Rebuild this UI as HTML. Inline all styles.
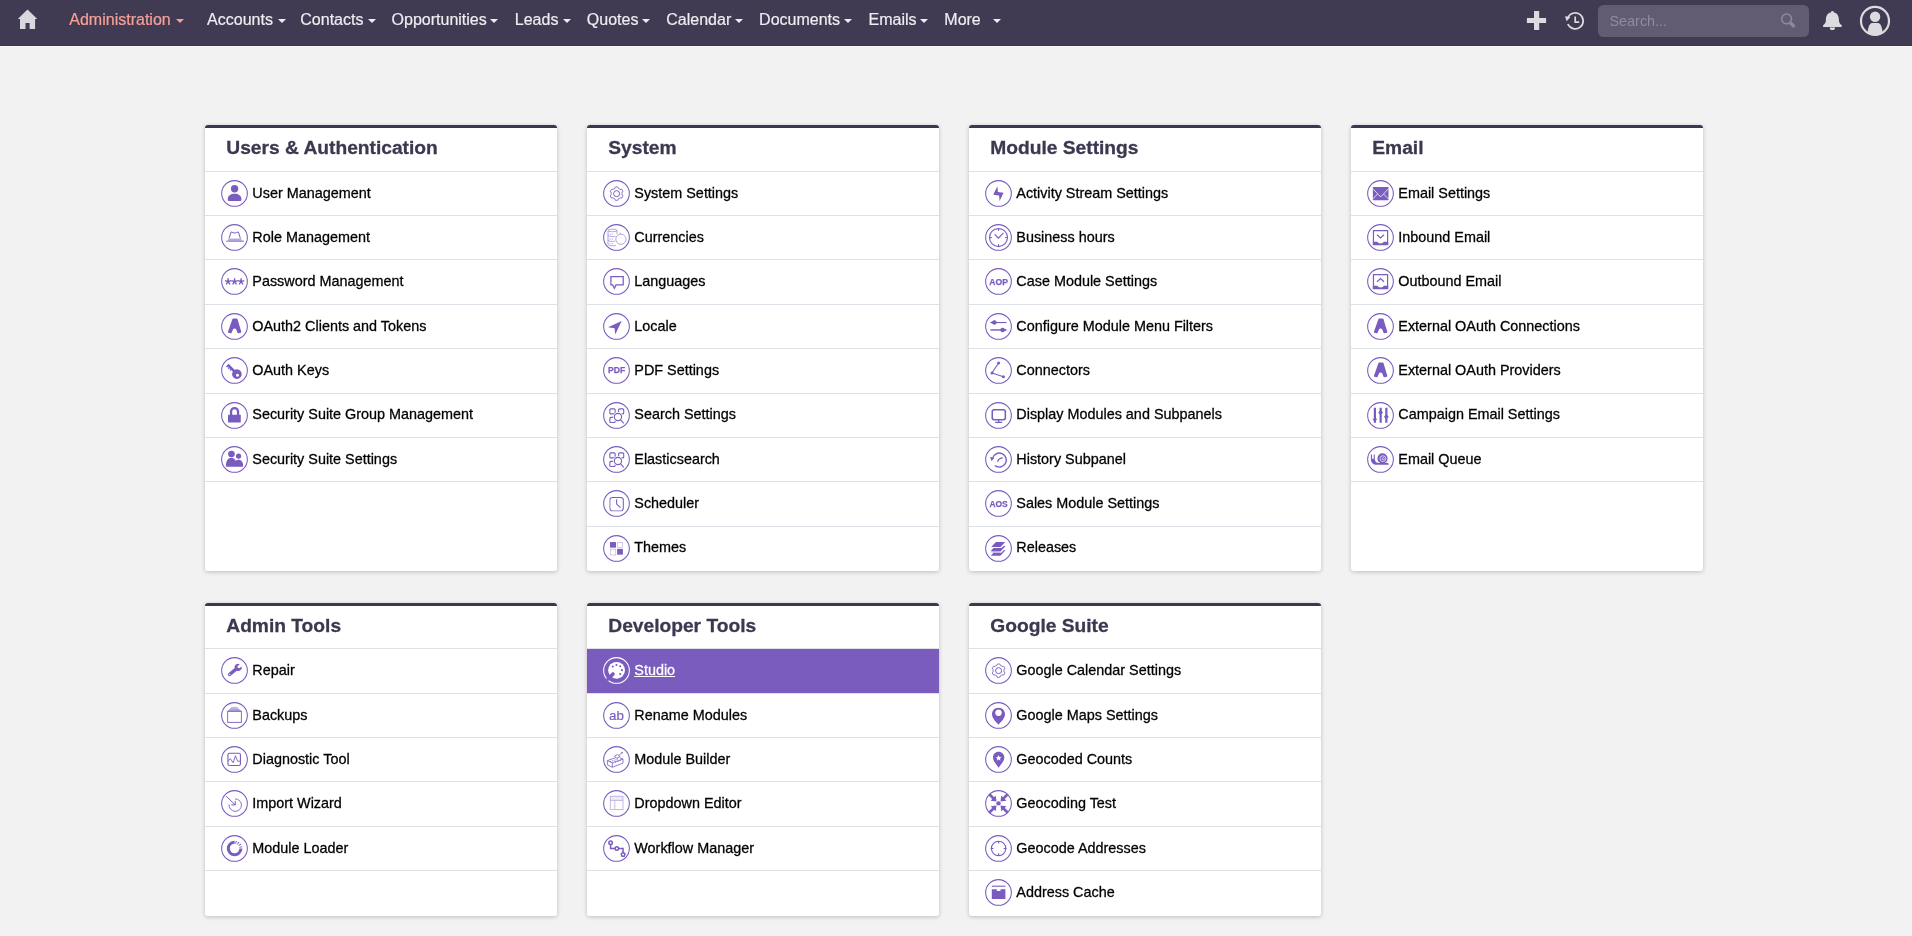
<!DOCTYPE html>
<html><head><meta charset="utf-8"><title>SuiteCRM - Administration</title>
<style>
*{box-sizing:border-box}
html,body{margin:0;padding:0}
body{width:1912px;height:936px;overflow:hidden;background:#f2f2f2;font-family:"Liberation Sans",sans-serif;position:relative;color:#000}
.nav{position:absolute;left:0;top:0;width:1912px;height:46.5px;background:#403a52;border-bottom:1px solid #f8f8f9;box-shadow:inset 0 -1px 0 #3a344b}
.ni{position:absolute;top:10.2px;font-size:16px;line-height:19px;color:#eeedf1;white-space:nowrap;-webkit-text-stroke:0.2px currentColor}
.ni.on{color:#f5a198}
.ni i{display:inline-block;width:0;height:0;border-left:4px solid transparent;border-right:4px solid transparent;border-top:4.3px solid currentColor;margin-left:5px;vertical-align:2.2px}
.wrap{position:absolute;left:0;top:0;width:1912px;height:936px;will-change:transform}
.nv{position:absolute}
.sb{position:absolute;left:1598px;top:5px;width:211px;height:32px;border-radius:5.5px;background:#625c73}
.sb span{position:absolute;left:11.5px;top:7.5px;font-size:14.4px;line-height:17px;color:#908b9f}
.card{position:absolute;width:352px;background:#fff;border-top:3px solid #3d3750;border-radius:3px;box-shadow:0 1px 4px rgba(0,0,0,.22);overflow:hidden}
.hd{height:43px;padding:7.8px 0 0 21.3px;font-size:19.2px;font-weight:bold;line-height:24px;color:#3d3750;white-space:nowrap;-webkit-text-stroke:0.3px #3d3750}
.row{position:absolute;left:0;width:352px;border-top:1px solid #dde2e8;font-size:14.4px;white-space:nowrap}
.row span{position:absolute;left:47.3px;line-height:16px;-webkit-text-stroke:0.28px currentColor}
.hd.g2{height:42px;padding-top:7.8px}
.row.act{background:#7a5cbe;color:#fff}
.row.act span{text-decoration:underline}
.ic{position:absolute;left:15px;top:7px;display:block}
</style></head><body><div class="wrap">
<div class="nav">
<svg class="nv" style="left:17px;top:9px" width="21" height="21" viewBox="0 0 21 21"><path fill="#d8d7dd" d="M10.5 0.4 L20.3 10 H18.1 V19.9 H12.6 V14 H8.5 V19.9 H3 V10 H0.8 Z"/></svg>
<div class="ni on" style="left:69.3px">Administration<i></i></div><div class="ni" style="left:207.1px">Accounts<i></i></div><div class="ni" style="left:300.3px">Contacts<i></i></div><div class="ni" style="left:391.6px">Opportunities<i style="margin-left:3.7px"></i></div><div class="ni" style="left:514.8px">Leads<i></i></div><div class="ni" style="left:586.8px">Quotes<i style="margin-left:4px"></i></div><div class="ni" style="left:666.3px">Calendar<i style="margin-left:3.6px"></i></div><div class="ni" style="left:759.1px">Documents<i style="margin-left:3.5px"></i></div><div class="ni" style="left:868.5px">Emails<i style="margin-left:3.2px"></i></div><div class="ni" style="left:944.3px">More<i style="margin-left:12px"></i></div>
<svg class="nv" style="left:1520px;top:0" width="392" height="45" viewBox="1520 0 392 45">
<defs><clipPath id="avc"><circle cx="1875" cy="20.9" r="14"/></clipPath></defs>
<path fill="#dcdbe0" d="M1534 11h5.2v7.1h6.900v4.900h-6.900v7.100h-5.200v-7.100h-7.100v-4.900h7.100z"/>
<g fill="none" stroke="#dcdbe0" stroke-width="1.7"><path d="M1567.700 18a8 8 0 1 1 0.100 6"/><path d="M1575.200 16.600v5.600h4"/></g>
<path fill="#dcdbe0" d="M1565 16.200l5.400 0.900-3.800 4.200z"/>
<g fill="#dcdbe0"><circle cx="1832.400" cy="12.300" r="1.400"/><path d="M1832.400 12.300c4.300 0 6.500 3.100 6.500 7.300 0 2.600 0.500 4.300 2.800 5.600v1.800h-18.600v-1.800c2.300-1.300 2.800-3 2.800-5.600 0-4.200 2.200-7.300 6.500-7.300z"/><path d="M1829.700 27.400a2.700 2.700 0 0 0 5.400 0z"/></g>
<circle cx="1875" cy="20.900" r="14" fill="none" stroke="#dcdbe0" stroke-width="2.200"/>
<circle cx="1875.100" cy="16.800" r="5.200" fill="#dcdbe0"/>
<path clip-path="url(#avc)" fill="#dcdbe0" d="M1867.400 38c0-4 0.200-15 5-15h5.400c4.800 0 5 11 5 15z"/>
</svg>
<div class="sb"><span>Search...</span><svg style="position:absolute;left:180px;top:7px" width="22" height="22" viewBox="0 0 22 22"><circle cx="8.600" cy="6.900" r="4.900" fill="none" stroke="#8e889d" stroke-width="1.500"/><path d="M13 11.500l2.400 2.300" stroke="#8e889d" stroke-width="3.300" stroke-linecap="round"/></svg></div>
</div>
<div class="card" style="left:205px;top:125px;height:445.70px"><div class="hd">Users &amp; Authentication</div><div class="row" style="top:43px;height:44px"><svg class="ic" width="28" height="28" viewBox="-0.5 -0.45 28 28" fill="#7a5cc0" stroke="none" style="color:#7a5cc0"><circle cx="14" cy="14" r="12.85" fill="none" stroke="#7a5cc0" stroke-width="1.05"/><circle cx="14.1" cy="9.300" r="3.650"/><path d="M7.300 20.600v-1.200c0-3 3-5 6.800-5s6.800 2 6.800 5v1.200a1 1 0 0 1-1 1h-11.600a1 1 0 0 1-1-1z"/></svg><span style="top:13.2px">User Management</span></div><div class="row" style="top:87px;height:44px"><svg class="ic" width="28" height="28" viewBox="-0.5 -0.45 28 28" fill="#7a5cc0" stroke="none" style="color:#7a5cc0"><circle cx="14" cy="14" r="12.85" fill="none" stroke="#7a5cc0" stroke-width="1.05"/><path fill="none" stroke="currentColor" stroke-width="1" stroke-linejoin="round" d="M8.600 14.900l2-6.400c1.500 0 2.400 1.200 3.650 1.200s2.150-1.200 3.650-1.200l2 6.400"/><rect x="7.700" y="15.100" width="13.200" height="2.100" opacity=".55"/><path fill="none" stroke="currentColor" stroke-width="1" d="M5.700 17.700h17.700"/></svg><span style="top:13.2px">Role Management</span></div><div class="row" style="top:131px;height:45px"><svg class="ic" width="28" height="28" viewBox="-0.5 -0.45 28 28" fill="#7a5cc0" stroke="none" style="color:#7a5cc0"><circle cx="14" cy="14" r="12.85" fill="none" stroke="#7a5cc0" stroke-width="1.05"/><path fill="none" stroke="currentColor" stroke-width="1.400" d="M7.60 14.20L7.60 10.90M7.60 14.20L10.74 13.18M7.60 14.20L9.54 16.87M7.60 14.20L5.66 16.87M7.60 14.20L4.46 13.18M14.10 14.20L14.10 10.90M14.10 14.20L17.24 13.18M14.10 14.20L16.04 16.87M14.10 14.20L12.16 16.87M14.10 14.20L10.96 13.18M20.60 14.20L20.60 10.90M20.60 14.20L23.74 13.18M20.60 14.20L22.54 16.87M20.60 14.20L18.66 16.87M20.60 14.20L17.46 13.18"/></svg><span style="top:13.2px">Password Management</span></div><div class="row" style="top:176px;height:44px"><svg class="ic" width="28" height="28" viewBox="-0.5 -0.45 28 28" fill="#7a5cc0" stroke="none" style="color:#7a5cc0"><circle cx="14" cy="14" r="12.85" fill="none" stroke="#7a5cc0" stroke-width="1.05"/><path stroke="currentColor" stroke-width="1.600" stroke-linejoin="round" d="M12.700 6.800h3.500l3.800 12.700-2.200 0.600-1.300-3.300c-0.400-1-1.300-1.600-2.400-1.600s-2 0.600-2.400 1.600l-1.300 3.300-2.200-0.600z"/></svg><span style="top:13.2px">OAuth2 Clients and Tokens</span></div><div class="row" style="top:220px;height:45px"><svg class="ic" width="28" height="28" viewBox="-0.5 -0.45 28 28" fill="#7a5cc0" stroke="none" style="color:#7a5cc0"><circle cx="14" cy="14" r="12.85" fill="none" stroke="#7a5cc0" stroke-width="1.05"/><path fill-rule="evenodd" d="M16.400 12.900a4.800 4.800 0 1 1-0.010 0zM17 17.300a1.500 1.500 0 1 0 0.010 0z"/><g transform="translate(16.400 17.700) rotate(-135)"><path d="M3 1.500H13.200V-2.300H11.600V-1.100H10.600V-2.300H9.300V-1.100H8.300V-2.300H7V-1.100H3Z"/></g></svg><span style="top:13.2px">OAuth Keys</span></div><div class="row" style="top:265px;height:44px"><svg class="ic" width="28" height="28" viewBox="-0.5 -0.45 28 28" fill="#7a5cc0" stroke="none" style="color:#7a5cc0"><circle cx="14" cy="14" r="12.85" fill="none" stroke="#7a5cc0" stroke-width="1.05"/><rect x="7.500" y="13.200" width="12.800" height="7.800" rx=".6"/><path fill="none" stroke="currentColor" stroke-width="2.300" d="M10.550 13.600v-3.500a3.500 3.500 0 0 1 7 0v3.500"/></svg><span style="top:12.2px">Security Suite Group Management</span></div><div class="row" style="top:309px;height:44px"><svg class="ic" width="28" height="28" viewBox="-0.5 -0.45 28 28" fill="#7a5cc0" stroke="none" style="color:#7a5cc0"><circle cx="14" cy="14" r="12.85" fill="none" stroke="#7a5cc0" stroke-width="1.05"/><circle cx="10.950" cy="8.550" r="3.330"/><circle cx="18.050" cy="10.650" r="2.640"/><path d="M5.450 20.300c0-5 2.400-7.900 5.300-7.900 2 0 3.500 1.200 4.300 3 0.900-0.700 1.900-1 3-1 2.800 0 4.600 2.400 4.600 5.900 0 0.600-0.400 1.050-1 1.050h-15.200c-0.600 0-1-0.450-1-1.050z"/></svg><span style="top:13.2px">Security Suite Settings</span></div><div class="row" style="top:353px;height:45px"></div></div>
<div class="card" style="left:587px;top:125px;height:445.70px"><div class="hd">System</div><div class="row" style="top:43px;height:44px"><svg class="ic" width="28" height="28" viewBox="-0.5 -0.45 28 28" fill="#7a5cc0" stroke="none" style="color:#7a5cc0"><circle cx="14" cy="14" r="12.85" fill="none" stroke="#7a5cc0" stroke-width="1.05"/><path fill="none" stroke="currentColor" stroke-width="1" stroke-linejoin="round" d="M19.60 14.20L19.58 14.68L19.52 15.16L19.99 15.78L20.40 16.49L20.17 17.03L19.90 17.55L19.59 18.04L19.23 18.51L18.41 18.51L17.64 18.41L17.25 18.71L16.85 18.96L16.42 19.18L15.98 19.37L15.68 20.09L15.26 20.80L14.68 20.87L14.10 20.90L13.52 20.87L12.94 20.80L12.52 20.09L12.22 19.37L11.78 19.18L11.35 18.96L10.95 18.71L10.56 18.41L9.79 18.51L8.97 18.51L8.61 18.04L8.30 17.55L8.03 17.03L7.80 16.49L8.21 15.78L8.68 15.16L8.62 14.68L8.60 14.20L8.62 13.72L8.68 13.24L8.21 12.62L7.80 11.91L8.03 11.37L8.30 10.85L8.61 10.36L8.97 9.89L9.79 9.89L10.56 9.99L10.95 9.69L11.35 9.44L11.78 9.22L12.22 9.03L12.52 8.31L12.94 7.60L13.52 7.53L14.10 7.50L14.68 7.53L15.26 7.60L15.68 8.31L15.98 9.03L16.42 9.22L16.85 9.44L17.25 9.69L17.64 9.99L18.41 9.89L19.23 9.89L19.59 10.36L19.90 10.85L20.17 11.37L20.40 11.91L19.99 12.62L19.52 13.24L19.58 13.72L19.60 14.20Z"/><circle fill="none" stroke="currentColor" stroke-width="1" cx="14.1" cy="14.200" r="3"/></svg><span style="top:13.2px">System Settings</span></div><div class="row" style="top:87px;height:44px"><svg class="ic" width="28" height="28" viewBox="-0.5 -0.45 28 28" fill="#7a5cc0" stroke="none" style="color:#7a5cc0"><circle cx="14" cy="14" r="12.85" fill="none" stroke="#7a5cc0" stroke-width="1.05"/><g fill="none" stroke="currentColor" stroke-width=".7" opacity=".8"><ellipse cx="10" cy="7" rx="4.500" ry="1.300"/><path d="M5.500 7v14c0 0.800 2 1.400 4.500 1.400 1.500 0 2.700-0.200 3.500-0.500M14.500 7v3.800M5.500 11.800c0 0.800 2 1.400 4.500 1.400 1.100 0 2.100-0.100 2.900-0.300M5.500 16.600c0 0.800 2 1.400 4.500 1.400 0.900 0 1.800-0.100 2.500-0.200"/><path stroke-dasharray="1.200 1" d="M7 10.800h3.500M7 15.600h3.500M7 20.300h3.500"/><circle cx="18.400" cy="15.800" r="5.100" fill="#fff"/><path d="M17 9.300l1.200 1.400"/></g></svg><span style="top:13.2px">Currencies</span></div><div class="row" style="top:131px;height:45px"><svg class="ic" width="28" height="28" viewBox="-0.5 -0.45 28 28" fill="#7a5cc0" stroke="none" style="color:#7a5cc0"><circle cx="14" cy="14" r="12.85" fill="none" stroke="#7a5cc0" stroke-width="1.05"/><path fill="none" stroke="currentColor" stroke-width="1.250" stroke-linejoin="miter" d="M8.400 9.250h12.300v8.250h-7.200l-1.600 3.300-1.700-3.300h-1.800z"/></svg><span style="top:13.2px">Languages</span></div><div class="row" style="top:176px;height:44px"><svg class="ic" width="28" height="28" viewBox="-0.5 -0.45 28 28" fill="#7a5cc0" stroke="none" style="color:#7a5cc0"><circle cx="14" cy="14" r="12.85" fill="none" stroke="#7a5cc0" stroke-width="1.05"/><path d="M19.200 8.500l-13.700 6.200 6.600 1.100 0.600 6.200z"/></svg><span style="top:13.2px">Locale</span></div><div class="row" style="top:220px;height:45px"><svg class="ic" width="28" height="28" viewBox="-0.5 -0.45 28 28" fill="#7a5cc0" stroke="none" style="color:#7a5cc0"><circle cx="14" cy="14" r="12.85" fill="none" stroke="#7a5cc0" stroke-width="1.05"/><text x="14.150" y="16.950" text-anchor="middle" font-family="Liberation Sans,sans-serif" font-weight="bold" font-size="8.600" stroke="currentColor" stroke-width=".25">PDF</text></svg><span style="top:13.2px">PDF Settings</span></div><div class="row" style="top:265px;height:44px"><svg class="ic" width="28" height="28" viewBox="-0.5 -0.45 28 28" fill="#7a5cc0" stroke="none" style="color:#7a5cc0"><circle cx="14" cy="14" r="12.85" fill="none" stroke="#7a5cc0" stroke-width="1.05"/><g fill="none" stroke="currentColor" stroke-width="1.100"><rect x="7.350" y="7.400" width="5.300" height="5.050" rx="1"/><rect x="16.150" y="7.400" width="5.050" height="5.050" rx="1"/><rect x="7.350" y="15.950" width="5.300" height="5.050" rx="1"/><circle cx="15.470" cy="15.550" r="4.900" fill="#fff" stroke="none"/><circle cx="15.470" cy="15.550" r="3.600" fill="#fff"/><path d="M18 18.100l3.300 3.800"/></g></svg><span style="top:12.2px">Search Settings</span></div><div class="row" style="top:309px;height:44px"><svg class="ic" width="28" height="28" viewBox="-0.5 -0.45 28 28" fill="#7a5cc0" stroke="none" style="color:#7a5cc0"><circle cx="14" cy="14" r="12.85" fill="none" stroke="#7a5cc0" stroke-width="1.05"/><g fill="none" stroke="currentColor" stroke-width="1.100"><rect x="7.350" y="7.400" width="5.300" height="5.050" rx="1"/><rect x="16.150" y="7.400" width="5.050" height="5.050" rx="1"/><rect x="7.350" y="15.950" width="5.300" height="5.050" rx="1"/><circle cx="15.470" cy="15.550" r="4.900" fill="#fff" stroke="none"/><circle cx="15.470" cy="15.550" r="3.600" fill="#fff"/><path d="M18 18.100l3.300 3.800"/></g></svg><span style="top:13.2px">Elasticsearch</span></div><div class="row" style="top:353px;height:45px"><svg class="ic" width="28" height="28" viewBox="-0.5 -0.45 28 28" fill="#7a5cc0" stroke="none" style="color:#7a5cc0"><circle cx="14" cy="14" r="12.85" fill="none" stroke="#7a5cc0" stroke-width="1.05"/><rect fill="none" stroke="currentColor" stroke-width="1.050" x="7.400" y="8.100" width="13.400" height="13.200" rx="2.600"/><rect x="6.950" y="9.500" width=".9" height="10.400" fill="#fff" opacity=".45"/><rect x="8.800" y="20.800" width="10.600" height=".9" fill="#fff" opacity=".45"/><path fill="none" stroke="currentColor" stroke-width="1.100" d="M14.150 9.900v4.700l3.800 3.500"/></svg><span style="top:13.2px">Scheduler</span></div><div class="row" style="top:398px;height:45px"><svg class="ic" width="28" height="28" viewBox="-0.5 -0.45 28 28" fill="#7a5cc0" stroke="none" style="color:#7a5cc0"><circle cx="14" cy="14" r="12.85" fill="none" stroke="#7a5cc0" stroke-width="1.05"/><rect x="7.500" y="7.600" width="6" height="5.600"/><rect x="14.600" y="14.400" width="5.800" height="5.800"/><rect fill="none" stroke="currentColor" stroke-width=".6" opacity=".5" x="14.900" y="7.900" width="5.200" height="5.200"/><rect fill="none" stroke="currentColor" stroke-width=".6" opacity=".5" x="7.800" y="14.700" width="5.400" height="5.800"/></svg><span style="top:12.2px">Themes</span></div></div>
<div class="card" style="left:969px;top:125px;height:445.70px"><div class="hd">Module Settings</div><div class="row" style="top:43px;height:44px"><svg class="ic" width="28" height="28" viewBox="-0.5 -0.45 28 28" fill="#7a5cc0" stroke="none" style="color:#7a5cc0"><circle cx="14" cy="14" r="12.85" fill="none" stroke="#7a5cc0" stroke-width="1.05"/><path d="M12.900 6.700l-4.200 8.500 5.900 0.900 0.500 5.400 4-8.100-5.700-0.900z"/></svg><span style="top:13.2px">Activity Stream Settings</span></div><div class="row" style="top:87px;height:44px"><svg class="ic" width="28" height="28" viewBox="-0.5 -0.45 28 28" fill="#7a5cc0" stroke="none" style="color:#7a5cc0"><circle cx="14" cy="14" r="12.85" fill="none" stroke="#7a5cc0" stroke-width="1.05"/><circle fill="none" stroke="currentColor" stroke-width="1.150" cx="14" cy="14.100" r="9"/><path fill="none" stroke="currentColor" stroke-width="1.150" d="M10.200 10.900l3.700 3.900 5.100-5.300"/><path fill="none" stroke="currentColor" stroke-width="1" d="M14 5.100v2.400M14 20.700v2.400M5 14.100h2.400M20.600 14.100h2.400"/></svg><span style="top:13.2px">Business hours</span></div><div class="row" style="top:131px;height:45px"><svg class="ic" width="28" height="28" viewBox="-0.5 -0.45 28 28" fill="#7a5cc0" stroke="none" style="color:#7a5cc0"><circle cx="14" cy="14" r="12.85" fill="none" stroke="#7a5cc0" stroke-width="1.05"/><text x="14.150" y="17.200" text-anchor="middle" font-family="Liberation Sans,sans-serif" font-weight="bold" font-size="8.600" stroke="currentColor" stroke-width=".25" textLength="18.600" lengthAdjust="spacingAndGlyphs">AOP</text></svg><span style="top:13.2px">Case Module Settings</span></div><div class="row" style="top:176px;height:44px"><svg class="ic" width="28" height="28" viewBox="-0.5 -0.45 28 28" fill="#7a5cc0" stroke="none" style="color:#7a5cc0"><circle cx="14" cy="14" r="12.85" fill="none" stroke="#7a5cc0" stroke-width="1.05"/><path fill="none" stroke="currentColor" stroke-width="1.100" d="M6.200 10.100h15.900"/><path fill="none" stroke="currentColor" stroke-width="1.450" d="M5.900 17.500h15.700"/><path d="M5.500 10.100l2.500-1.200c0.500-0.800 1.200-1.100 1.900-1.100a2.100 2.100 0 0 1 0 4.500c-0.700 0-1.400-0.300-1.900-1zM22.500 17.500l-2.500-1.200c-0.500-0.800-1.200-1.100-1.900-1.100a2.100 2.100 0 0 0 0 4.500c0.700 0 1.400-0.300 1.900-1z"/></svg><span style="top:13.2px">Configure Module Menu Filters</span></div><div class="row" style="top:220px;height:45px"><svg class="ic" width="28" height="28" viewBox="-0.5 -0.45 28 28" fill="#7a5cc0" stroke="none" style="color:#7a5cc0"><circle cx="14" cy="14" r="12.85" fill="none" stroke="#7a5cc0" stroke-width="1.05"/><path fill="none" stroke="currentColor" stroke-width="1.100" d="M14.100 6.600l-6.600 9.900 11.400 3.700"/><circle cx="14.100" cy="6.600" r="1.500"/><circle cx="7.500" cy="16.500" r="1.500"/><circle cx="18.900" cy="20.200" r="1.500"/></svg><span style="top:13.2px">Connectors</span></div><div class="row" style="top:265px;height:44px"><svg class="ic" width="28" height="28" viewBox="-0.5 -0.45 28 28" fill="#7a5cc0" stroke="none" style="color:#7a5cc0"><circle cx="14" cy="14" r="12.85" fill="none" stroke="#7a5cc0" stroke-width="1.05"/><rect fill="none" stroke="currentColor" stroke-width="1.550" x="7.750" y="8.300" width="13.100" height="9.900" rx="1.900"/><path fill="none" stroke="currentColor" stroke-width="1.200" d="M14.200 18.600v2.300M10.600 20.900h7.100"/></svg><span style="top:12.2px">Display Modules and Subpanels</span></div><div class="row" style="top:309px;height:44px"><svg class="ic" width="28" height="28" viewBox="-0.5 -0.45 28 28" fill="#7a5cc0" stroke="none" style="color:#7a5cc0"><circle cx="14" cy="14" r="12.85" fill="none" stroke="#7a5cc0" stroke-width="1.05"/><path fill="none" stroke="currentColor" stroke-width="1.400" d="M8 13a7 7 0 1 1 2.300 7"/><path d="M5.600 11.300l4 1.200-2.600 3.400z"/><path fill="none" stroke="currentColor" stroke-width="1.300" stroke-linecap="round" d="M13.300 16c0.300-1.800 2-3 4.500-3.500"/></svg><span style="top:13.2px">History Subpanel</span></div><div class="row" style="top:353px;height:45px"><svg class="ic" width="28" height="28" viewBox="-0.5 -0.45 28 28" fill="#7a5cc0" stroke="none" style="color:#7a5cc0"><circle cx="14" cy="14" r="12.85" fill="none" stroke="#7a5cc0" stroke-width="1.05"/><text x="14.100" y="17.500" text-anchor="middle" font-family="Liberation Sans,sans-serif" font-weight="bold" font-size="8.600" stroke="currentColor" stroke-width=".25" textLength="18.200" lengthAdjust="spacingAndGlyphs">AOS</text></svg><span style="top:13.2px">Sales Module Settings</span></div><div class="row" style="top:398px;height:45px"><svg class="ic" width="28" height="28" viewBox="-0.5 -0.45 28 28" fill="#7a5cc0" stroke="none" style="color:#7a5cc0"><circle cx="14" cy="14" r="12.85" fill="none" stroke="#7a5cc0" stroke-width="1.05"/><path d="M11.350 7.650h9.350l-4.650 4.800h-9.350z"/><path d="M8.900 13.600h8.100l2.100-2h2l-4.900 5.200h-10.100z"/><path d="M9 18.200h7.800l2.500-2.400h1.800l-5.300 5.550h-9.500z"/><path d="M7.700 16.900h8.500l-1.200 1.200h-8.500z" opacity=".4"/></svg><span style="top:12.2px">Releases</span></div></div>
<div class="card" style="left:1351px;top:125px;height:445.70px"><div class="hd">Email</div><div class="row" style="top:43px;height:44px"><svg class="ic" width="28" height="28" viewBox="-0.5 -0.45 28 28" fill="#7a5cc0" stroke="none" style="color:#7a5cc0"><circle cx="14" cy="14" r="12.85" fill="none" stroke="#7a5cc0" stroke-width="1.05"/><rect x="6.350" y="7.600" width="15.650" height="13.150" rx=".4"/><path fill="none" stroke="#fff" stroke-width=".75" d="M6.350 9.200l7.800 8.300 7.850-8.300M6.350 19.500l4.650-4.900M22 19.500l-4.800-4.900"/></svg><span style="top:13.2px">Email Settings</span></div><div class="row" style="top:87px;height:44px"><svg class="ic" width="28" height="28" viewBox="-0.5 -0.45 28 28" fill="#7a5cc0" stroke="none" style="color:#7a5cc0"><circle cx="14" cy="14" r="12.85" fill="none" stroke="#7a5cc0" stroke-width="1.05"/><path fill="none" stroke="currentColor" stroke-width="1.200" d="M6.950 21v-13.800h14.150v13.800"/><path d="M6.350 18.300h4.650c0.400 1 1.600 1.650 3.100 1.650s2.700-0.650 3.100-1.650h4.500v3.400h-15.350z"/><path fill="none" stroke="currentColor" stroke-width="1.200" d="M10.500 11.300l3.500 3.300 3.500-3.300"/></svg><span style="top:13.2px">Inbound Email</span></div><div class="row" style="top:131px;height:45px"><svg class="ic" width="28" height="28" viewBox="-0.5 -0.45 28 28" fill="#7a5cc0" stroke="none" style="color:#7a5cc0"><circle cx="14" cy="14" r="12.85" fill="none" stroke="#7a5cc0" stroke-width="1.05"/><path fill="none" stroke="currentColor" stroke-width="1.200" d="M6.950 21v-13.800h14.150v13.800"/><path d="M6.350 18.300h4.650c0.400 1 1.600 1.650 3.100 1.650s2.700-0.650 3.100-1.650h4.500v3.400h-15.350z"/><path fill="none" stroke="currentColor" stroke-width="1.200" d="M10.500 14.300l3.500-3.300 3.500 3.300"/></svg><span style="top:13.2px">Outbound Email</span></div><div class="row" style="top:176px;height:44px"><svg class="ic" width="28" height="28" viewBox="-0.5 -0.45 28 28" fill="#7a5cc0" stroke="none" style="color:#7a5cc0"><circle cx="14" cy="14" r="12.85" fill="none" stroke="#7a5cc0" stroke-width="1.05"/><path stroke="currentColor" stroke-width="1.600" stroke-linejoin="round" d="M12.700 6.800h3.500l3.800 12.700-2.200 0.600-1.300-3.300c-0.400-1-1.300-1.600-2.400-1.600s-2 0.600-2.400 1.600l-1.300 3.300-2.200-0.600z"/></svg><span style="top:13.2px">External OAuth Connections</span></div><div class="row" style="top:220px;height:45px"><svg class="ic" width="28" height="28" viewBox="-0.5 -0.45 28 28" fill="#7a5cc0" stroke="none" style="color:#7a5cc0"><circle cx="14" cy="14" r="12.85" fill="none" stroke="#7a5cc0" stroke-width="1.05"/><path stroke="currentColor" stroke-width="1.600" stroke-linejoin="round" d="M12.700 6.800h3.500l3.800 12.700-2.200 0.600-1.300-3.300c-0.400-1-1.300-1.600-2.400-1.600s-2 0.600-2.400 1.600l-1.300 3.300-2.200-0.600z"/></svg><span style="top:13.2px">External OAuth Providers</span></div><div class="row" style="top:265px;height:44px"><svg class="ic" width="28" height="28" viewBox="-0.5 -0.45 28 28" fill="#7a5cc0" stroke="none" style="color:#7a5cc0"><circle cx="14" cy="14" r="12.85" fill="none" stroke="#7a5cc0" stroke-width="1.05"/><path fill="none" stroke="currentColor" stroke-width="2.200" d="M8.400 6.400v15M14.150 6.400v15M19.850 6.400v15"/><path d="M6 17.300h4.800l-2.400 3.800zM11.750 11.100l2.400-2.700 2.400 2.700-2.400 2.600zM17.450 15.400l2.400-2.600 2.400 2.600-2.400 2.600z"/></svg><span style="top:12.2px">Campaign Email Settings</span></div><div class="row" style="top:309px;height:44px"><svg class="ic" width="28" height="28" viewBox="-0.5 -0.45 28 28" fill="#7a5cc0" stroke="none" style="color:#7a5cc0"><circle cx="14" cy="14" r="12.85" fill="none" stroke="#7a5cc0" stroke-width="1.05"/><path d="M4.400 9.100h1.100v4.300c0.300 0.100 0.900 0.100 1.700 0v-4.300h1.100v4.800c0.200 1.600 1 2.800 2.300 3.500h9.500c1.300 0 2 0.700 2.200 1.900h-13.500c-2.400-0.300-4.400-2.600-4.400-5.300z"/><circle cx="16" cy="13" r="5.100"/><circle cx="16.400" cy="13.200" r="2.900" fill="none" stroke="#fff" stroke-width=".7"/><circle cx="16.700" cy="13.300" r="1.100" fill="none" stroke="#fff" stroke-width=".6"/></svg><span style="top:13.2px">Email Queue</span></div><div class="row" style="top:353px;height:45px"></div></div>
<div class="card" style="left:205px;top:603px;height:312.60px"><div class="hd g2">Admin Tools</div><div class="row" style="top:42px;height:45px"><svg class="ic" width="28" height="28" viewBox="-0.5 -0.45 28 28" fill="#7a5cc0" stroke="none" style="color:#7a5cc0"><circle cx="14" cy="14" r="12.85" fill="none" stroke="#7a5cc0" stroke-width="1.05"/><g transform="rotate(50.3 14 14)"><path d="M12.300 20.400a1.700 1.700 0 0 0 3.400 0V12.400A3.500 3.500 0 0 0 15.400 6V9L14 9.900L12.600 9V6A3.500 3.500 0 0 0 12.300 12.400Z"/><circle cx="14" cy="20.100" r=".65" fill="#fff"/></g></svg><span style="top:13.2px">Repair</span></div><div class="row" style="top:87px;height:44px"><svg class="ic" width="28" height="28" viewBox="-0.5 -0.45 28 28" fill="#7a5cc0" stroke="none" style="color:#7a5cc0"><circle cx="14" cy="14" r="12.85" fill="none" stroke="#7a5cc0" stroke-width="1.05"/><rect fill="none" stroke="currentColor" stroke-width=".9" x="7.150" y="9.900" width="13.700" height="11"/><path d="M6.700 9.700l3.500-2.900h7.400l3.700 2.900z" opacity=".6"/><rect x="10.600" y="5.400" width="6.600" height="1.200" opacity=".45"/></svg><span style="top:13.2px">Backups</span></div><div class="row" style="top:131px;height:44px"><svg class="ic" width="28" height="28" viewBox="-0.5 -0.45 28 28" fill="#7a5cc0" stroke="none" style="color:#7a5cc0"><circle cx="14" cy="14" r="12.85" fill="none" stroke="#7a5cc0" stroke-width="1.05"/><rect fill="none" stroke="currentColor" stroke-width="1.100" x="7.450" y="7.800" width="12.500" height="12.250" rx="1.500"/><path fill="none" stroke="currentColor" stroke-width=".9" stroke-linejoin="miter" d="M7.500 15.800l2.300-2.600 2.900 4.100 2.200-7 2.300 5.500h2.800"/></svg><span style="top:13.2px">Diagnostic Tool</span></div><div class="row" style="top:175px;height:45px"><svg class="ic" width="28" height="28" viewBox="-0.5 -0.45 28 28" fill="#7a5cc0" stroke="none" style="color:#7a5cc0"><circle cx="14" cy="14" r="12.85" fill="none" stroke="#7a5cc0" stroke-width="1.05"/><path fill="none" stroke="currentColor" stroke-width=".9" d="M8.600 15a6.200 6.200 0 1 0 5.900-5.550"/><path fill="none" stroke="currentColor" stroke-width="1" d="M5.700 6.750l9 8.700M14.750 11.500v3.950h-3.900"/></svg><span style="top:13.2px">Import Wizard</span></div><div class="row" style="top:220px;height:44px"><svg class="ic" width="28" height="28" viewBox="-0.5 -0.45 28 28" fill="#7a5cc0" stroke="none" style="color:#7a5cc0"><circle cx="14" cy="14" r="12.85" fill="none" stroke="#7a5cc0" stroke-width="1.05"/><path fill="none" stroke="currentColor" stroke-width="3" d="M20.400 14.050a6.300 6.300 0 1 1-6.300-6.300"/><path fill="none" stroke="currentColor" stroke-width="3" stroke-dasharray=".95 1.350" d="M15 7.800a6.300 6.300 0 0 1 5.400 5.600"/></svg><span style="top:13.2px">Module Loader</span></div><div class="row" style="top:264px;height:46px"></div></div>
<div class="card" style="left:587px;top:603px;height:312.60px"><div class="hd g2">Developer Tools</div><div class="row act" style="top:42px;height:45px"><svg class="ic" width="28" height="28" viewBox="-0.5 -0.45 28 28" fill="#fff" stroke="none" style="color:#fff"><circle cx="14" cy="14" r="12.85" fill="none" stroke="#fff" stroke-width="1.05"/><circle cx="14.060" cy="13.850" r="8.400"/><path d="M10.500 17.500L5.500 22.500" stroke="#7a5cbe" stroke-width="3.500" stroke-linecap="round"/><g fill="#7a5cbe"><circle cx="10.300" cy="10" r="1.050"/><circle cx="14" cy="8.550" r="1.050"/><circle cx="17.700" cy="9.800" r="1.050"/><circle cx="19.450" cy="13.700" r="1.050"/><circle cx="17.700" cy="17.500" r="1.050"/></g></svg><span style="top:13.2px">Studio</span></div><div class="row" style="top:87px;height:44px"><svg class="ic" width="28" height="28" viewBox="-0.5 -0.45 28 28" fill="#7a5cc0" stroke="none" style="color:#7a5cc0"><circle cx="14" cy="14" r="12.85" fill="none" stroke="#7a5cc0" stroke-width="1.05"/><text x="14" y="18.300" text-anchor="middle" font-family="Liberation Sans,sans-serif" font-size="13.300" stroke="currentColor" stroke-width=".2">ab</text></svg><span style="top:13.2px">Rename Modules</span></div><div class="row" style="top:131px;height:44px"><svg class="ic" width="28" height="28" viewBox="-0.5 -0.45 28 28" fill="#7a5cc0" stroke="none" style="color:#7a5cc0"><circle cx="14" cy="14" r="12.85" fill="none" stroke="#7a5cc0" stroke-width="1.05"/><g fill="none" stroke="currentColor" stroke-width=".8" stroke-linejoin="round"><path d="M4.900 15.200l4.900 2.100 10.700-3.700v4.100l-10.700 4.100-4.900-2.450zM9.800 17.300v4.500M4.900 15.200l8-2.900M17.300 12.400l3.200 1.200"/><path d="M11.900 10.700l3.250-1.600 2.450 2-3.700 1.700zM16.400 9.900l3-2.500"/><path stroke-dasharray="1.400 1" d="M7.300 16.400l9-3.200M12.500 16.900l6.500-2.300"/></g><circle cx="19.600" cy="7.200" r=".8"/></svg><span style="top:13.2px">Module Builder</span></div><div class="row" style="top:175px;height:45px"><svg class="ic" width="28" height="28" viewBox="-0.5 -0.45 28 28" fill="#7a5cc0" stroke="none" style="color:#7a5cc0"><circle cx="14" cy="14" r="12.85" fill="none" stroke="#7a5cc0" stroke-width="1.05"/><g fill="none" stroke="currentColor" stroke-width=".7" opacity=".6"><rect x="7.750" y="6.750" width="12.750" height="13.150"/><path d="M7.750 10.900h12.750M12.300 10.900v9"/></g><rect x="7.750" y="6.750" width="12.750" height="4.150" opacity=".12"/></svg><span style="top:13.2px">Dropdown Editor</span></div><div class="row" style="top:220px;height:44px"><svg class="ic" width="28" height="28" viewBox="-0.5 -0.45 28 28" fill="#7a5cc0" stroke="none" style="color:#7a5cc0"><circle cx="14" cy="14" r="12.85" fill="none" stroke="#7a5cc0" stroke-width="1.05"/><g fill="none" stroke="currentColor" stroke-width="1.500"><circle cx="8.100" cy="8.350" r="1.750"/><circle cx="14.300" cy="14.050" r="1.750"/><path d="M20.600 17.900l1.900 1.500-0.700 2.300h-2.400l-0.700-2.300z" stroke-linejoin="round"/><path d="M8.100 10.100v3.950h4.400M16.100 14.050h4.400v3.700"/></g></svg><span style="top:13.2px">Workflow Manager</span></div><div class="row" style="top:264px;height:46px"></div></div>
<div class="card" style="left:969px;top:603px;height:312.60px"><div class="hd g2">Google Suite</div><div class="row" style="top:42px;height:45px"><svg class="ic" width="28" height="28" viewBox="-0.5 -0.45 28 28" fill="#7a5cc0" stroke="none" style="color:#7a5cc0"><circle cx="14" cy="14" r="12.85" fill="none" stroke="#7a5cc0" stroke-width="1.05"/><path fill="none" stroke="currentColor" stroke-width="1" stroke-linejoin="round" d="M19.60 14.20L19.58 14.68L19.52 15.16L19.99 15.78L20.40 16.49L20.17 17.03L19.90 17.55L19.59 18.04L19.23 18.51L18.41 18.51L17.64 18.41L17.25 18.71L16.85 18.96L16.42 19.18L15.98 19.37L15.68 20.09L15.26 20.80L14.68 20.87L14.10 20.90L13.52 20.87L12.94 20.80L12.52 20.09L12.22 19.37L11.78 19.18L11.35 18.96L10.95 18.71L10.56 18.41L9.79 18.51L8.97 18.51L8.61 18.04L8.30 17.55L8.03 17.03L7.80 16.49L8.21 15.78L8.68 15.16L8.62 14.68L8.60 14.20L8.62 13.72L8.68 13.24L8.21 12.62L7.80 11.91L8.03 11.37L8.30 10.85L8.61 10.36L8.97 9.89L9.79 9.89L10.56 9.99L10.95 9.69L11.35 9.44L11.78 9.22L12.22 9.03L12.52 8.31L12.94 7.60L13.52 7.53L14.10 7.50L14.68 7.53L15.26 7.60L15.68 8.31L15.98 9.03L16.42 9.22L16.85 9.44L17.25 9.69L17.64 9.99L18.41 9.89L19.23 9.89L19.59 10.36L19.90 10.85L20.17 11.37L20.40 11.91L19.99 12.62L19.52 13.24L19.58 13.72L19.60 14.20Z"/><circle fill="none" stroke="currentColor" stroke-width="1" cx="14.1" cy="14.200" r="3"/></svg><span style="top:13.2px">Google Calendar Settings</span></div><div class="row" style="top:87px;height:44px"><svg class="ic" width="28" height="28" viewBox="-0.5 -0.45 28 28" fill="#7a5cc0" stroke="none" style="color:#7a5cc0"><circle cx="14" cy="14" r="12.85" fill="none" stroke="#7a5cc0" stroke-width="1.05"/><path fill-rule="evenodd" d="M14 6.300c3.700 0 6.500 2.800 6.500 6.400 0 3.500-3 6.700-6.500 10.500-3.500-3.800-6.500-7-6.500-10.500 0-3.600 2.800-6.400 6.500-6.400zM14 8a3.300 3.300 0 1 0 .01 0z"/></svg><span style="top:13.2px">Google Maps Settings</span></div><div class="row" style="top:131px;height:44px"><svg class="ic" width="28" height="28" viewBox="-0.5 -0.45 28 28" fill="#7a5cc0" stroke="none" style="color:#7a5cc0"><circle cx="14" cy="14" r="12.85" fill="none" stroke="#7a5cc0" stroke-width="1.05"/><path d="M14.150 6.400c3.250 0 5.700 2.500 5.700 5.700 0 3.200-2.700 6.300-5.700 10.100-3-3.800-5.700-6.900-5.700-10.100 0-3.200 2.450-5.700 5.700-5.700z"/><path fill="#fff" d="M14.15 9.60L14.97 11.57L17.10 11.74L15.48 13.13L15.97 15.21L14.15 14.10L12.33 15.21L12.82 13.13L11.20 11.74L13.33 11.57Z"/></svg><span style="top:13.2px">Geocoded Counts</span></div><div class="row" style="top:175px;height:45px"><svg class="ic" width="28" height="28" viewBox="-0.5 -0.45 28 28" fill="#7a5cc0" stroke="none" style="color:#7a5cc0"><circle cx="14" cy="14" r="12.85" fill="none" stroke="#7a5cc0" stroke-width="1.05"/><defs><clipPath id="gc"><circle cx="14" cy="14" r="13.300"/></clipPath></defs><g clip-path="url(#gc)"><g transform="rotate(0 14 14)"><path fill="none" stroke="currentColor" stroke-width="2.700" d="M4.600 4.600l5.600 5.600"/><path d="M12 12l-5.900-0.800 5.100-5.100z"/></g><g transform="rotate(90 14 14)"><path fill="none" stroke="currentColor" stroke-width="2.700" d="M4.600 4.600l5.600 5.600"/><path d="M12 12l-5.900-0.800 5.100-5.100z"/></g><g transform="rotate(180 14 14)"><path fill="none" stroke="currentColor" stroke-width="2.700" d="M4.600 4.600l5.600 5.600"/><path d="M12 12l-5.900-0.800 5.100-5.100z"/></g><g transform="rotate(270 14 14)"><path fill="none" stroke="currentColor" stroke-width="2.700" d="M4.600 4.600l5.600 5.600"/><path d="M12 12l-5.900-0.800 5.100-5.100z"/></g></g><circle cx="14" cy="13.900" r="2.200"/></svg><span style="top:13.2px">Geocoding Test</span></div><div class="row" style="top:220px;height:44px"><svg class="ic" width="28" height="28" viewBox="-0.5 -0.45 28 28" fill="#7a5cc0" stroke="none" style="color:#7a5cc0"><circle cx="14" cy="14" r="12.85" fill="none" stroke="#7a5cc0" stroke-width="1.05"/><circle fill="none" stroke="currentColor" stroke-width="1.100" cx="14.100" cy="14" r="7.200"/><path fill="none" stroke="currentColor" stroke-width="1.100" d="M14.100 6.500v2.600M14.100 18.900v2.600M6.200 14h2.800M19.200 14h2.800"/></svg><span style="top:13.2px">Geocode Addresses</span></div><div class="row" style="top:264px;height:46px"><svg class="ic" width="28" height="28" viewBox="-0.5 -0.45 28 28" fill="#7a5cc0" stroke="none" style="color:#7a5cc0"><circle cx="14" cy="14" r="12.85" fill="none" stroke="#7a5cc0" stroke-width="1.05"/><path fill="none" stroke="currentColor" stroke-width="1.100" d="M7.300 7.750h13.600"/><path d="M7.300 10.900h5v1.600h3.700v-1.600h4.900v9.700h-13.600z"/></svg><span style="top:13.2px">Address Cache</span></div></div>
</div></body></html>
